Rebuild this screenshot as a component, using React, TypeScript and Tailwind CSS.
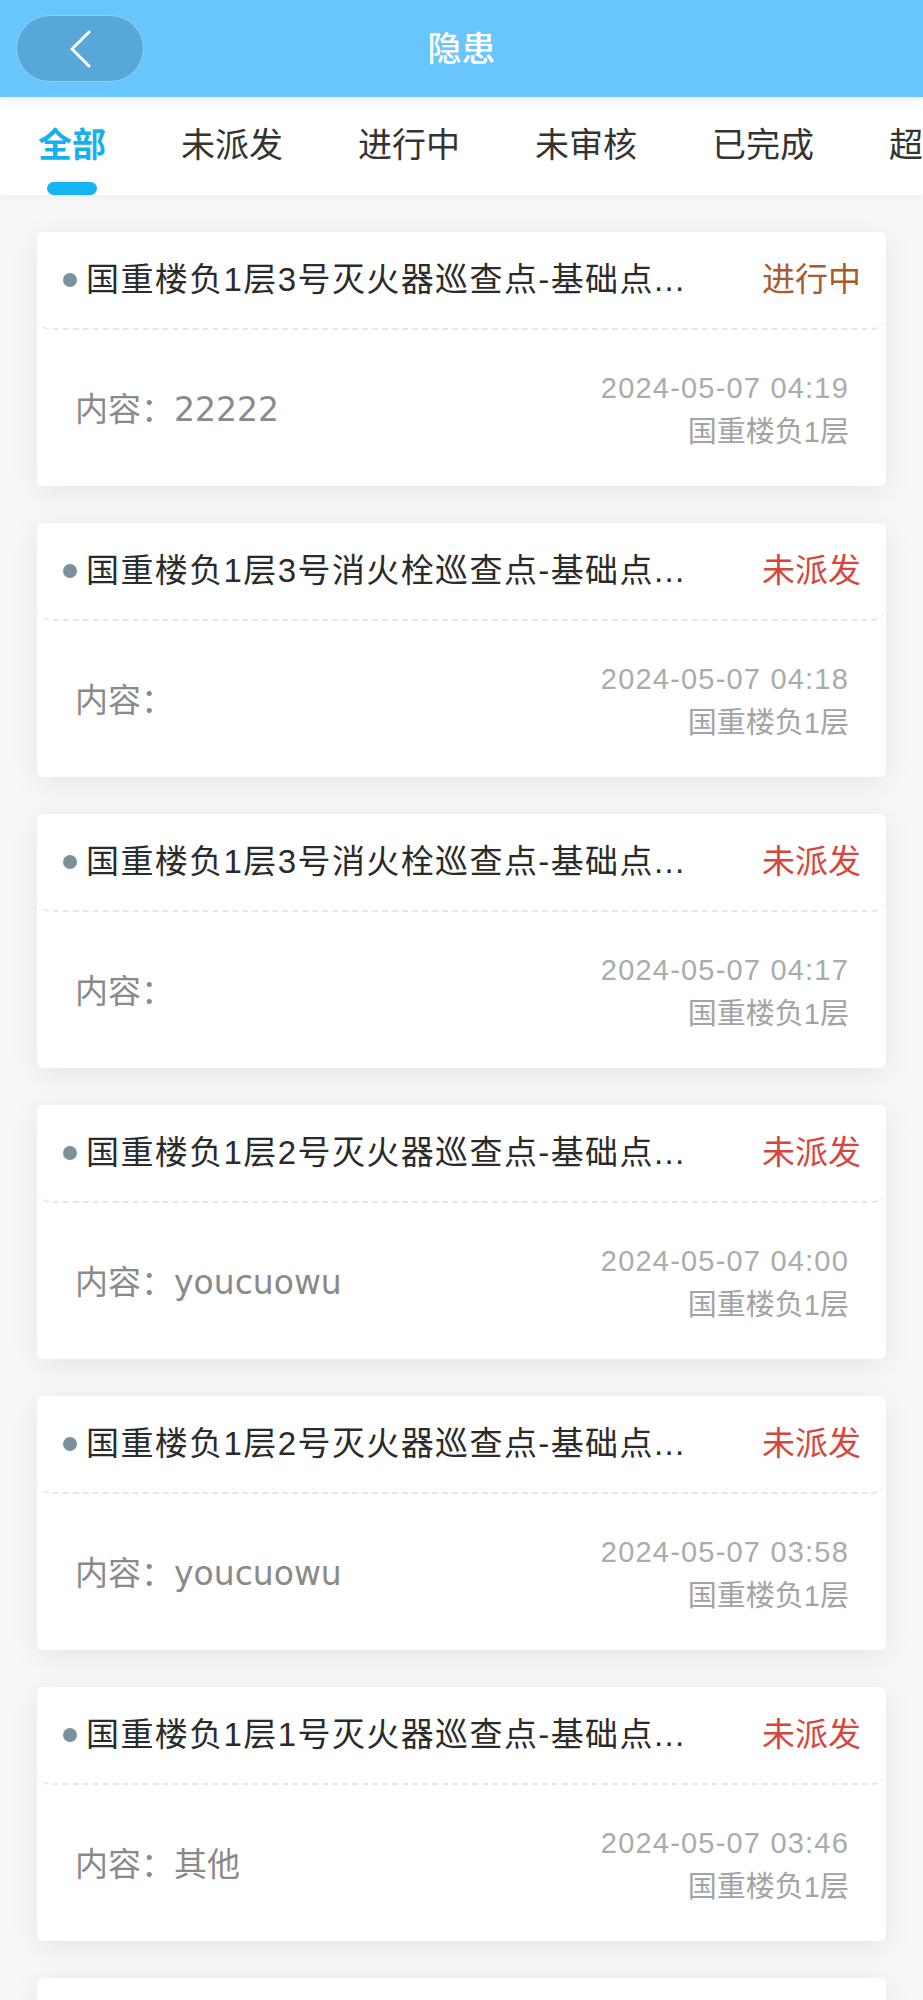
const tabs = ["全部", "未派发", "进行中", "未审核", "已完成", "超期"];

type Item = {
  title: string;
  status: string;
  content: string;
  time: string;
  place: string;
};

const items: Item[] = [
  { title: "国重楼负1层3号灭火器巡查点-基础点...", status: "进行中", content: "22222", time: "2024-05-07 04:19", place: "国重楼负1层" },
  { title: "国重楼负1层3号消火栓巡查点-基础点...", status: "未派发", content: "", time: "2024-05-07 04:18", place: "国重楼负1层" },
  { title: "国重楼负1层3号消火栓巡查点-基础点...", status: "未派发", content: "", time: "2024-05-07 04:17", place: "国重楼负1层" },
  { title: "国重楼负1层2号灭火器巡查点-基础点...", status: "未派发", content: "youcuowu", time: "2024-05-07 04:00", place: "国重楼负1层" },
  { title: "国重楼负1层2号灭火器巡查点-基础点...", status: "未派发", content: "youcuowu", time: "2024-05-07 03:58", place: "国重楼负1层" },
  { title: "国重楼负1层1号灭火器巡查点-基础点...", status: "未派发", content: "其他", time: "2024-05-07 03:46", place: "国重楼负1层" },
  { title: "国重楼负1层1号消火栓巡查点-基础点...", status: "未派发", content: "", time: "2024-05-07 03:40", place: "国重楼负1层" },
];

function Card({ item }: { item: Item }) {
  return (
    <div className="h-[254px] shrink-0 flex flex-col bg-white rounded-[6px] shadow-[0_6px_30px_rgba(0,0,0,0.08)]">
      <div className="h-[98px] shrink-0 flex items-center pl-[26px] pr-[25px] rounded-[14px] border-b-2 border-dashed border-[#e6e6e6]">
        <span className="w-[14px] h-[14px] rounded-full bg-[#7b909d] shrink-0" />
        <p className="ml-[9px] flex-1 min-w-0 whitespace-nowrap text-[33px] leading-[44px] tracking-[1.4px] text-[#2b2b2b] font-['Liberation_Sans','Noto_Sans_CJK_SC',sans-serif]">
          {item.title}
        </p>
        <span className={item.status === "进行中" ? "shrink-0 text-[33px] leading-[44px] text-[#aa5b2c]" : "shrink-0 text-[33px] leading-[44px] text-[#d7463d]"}>
          {item.status}
        </span>
      </div>
      <div className="flex-1 flex items-center justify-between pl-[38px] pr-[37px] pt-[4px]">
        <p className="text-[33px] leading-[44px] text-[#8a8a8a] font-['DejaVu_Sans','Noto_Sans_CJK_SC',sans-serif]">
          内容：{item.content}
        </p>
        <div className="flex flex-col items-end">
          <p className="text-[29px] leading-[44px] tracking-[1.2px] text-[#ababab] font-['Liberation_Sans',sans-serif]">{item.time}</p>
          <p className="text-[29px] leading-[44px] text-[#a3a3a3] font-['Liberation_Sans','Noto_Sans_CJK_SC',sans-serif]">{item.place}</p>
        </div>
      </div>
    </div>
  );
}

function App() {
  return (
    <div className="w-full min-h-screen bg-[#f7f7f7] font-['Liberation_Sans','Noto_Sans_CJK_SC',sans-serif]">
      <header className="relative z-10 h-[97px] bg-[#69c6fd] grid grid-cols-[1fr_auto_1fr] items-center shadow-[0_3px_10px_rgba(0,0,0,0.07)]">
        <div className="pl-[16px]">
          <button className="w-[128px] h-[67px] rounded-full bg-[#58a7d9] border border-[#8fd3f9] flex items-center justify-center">
            <svg width="24" height="38" viewBox="0 0 24 38" fill="none">
              <path d="M21 2 L4 19 L21 36" stroke="white" strokeWidth="3" strokeLinecap="round" strokeLinejoin="round" />
            </svg>
          </button>
        </div>
        <h1 className="text-[34px] leading-none text-white font-medium">隐患</h1>
        <div />
      </header>

      <nav className="h-[98px] bg-white flex pl-[0.5px] overflow-hidden whitespace-nowrap shadow-[0_2px_6px_rgba(0,0,0,0.04)]">
        {tabs.map((t, i) => (
          <div key={t} className="shrink-0 px-[37.5px] flex flex-col items-center">
            <span className={i === 0 ? "mt-[31px] h-[34px] text-[34px] leading-[34px] text-[#17b0ee] font-bold" : "mt-[31px] h-[34px] text-[34px] leading-[34px] text-[#333333]"}>
              {t}
            </span>
            <span className={i === 0 ? "mt-[20px] w-[50px] h-[13px] rounded-full bg-[#17b4f2]" : "mt-[20px] w-[50px] h-[13px]"} />
          </div>
        ))}
      </nav>

      <main className="px-[37px] pt-[37px] pb-[40px] flex flex-col gap-[37px]">
        {items.map((it, i) => (
          <Card key={i} item={it} />
        ))}
      </main>
    </div>
  );
}

export default App;
